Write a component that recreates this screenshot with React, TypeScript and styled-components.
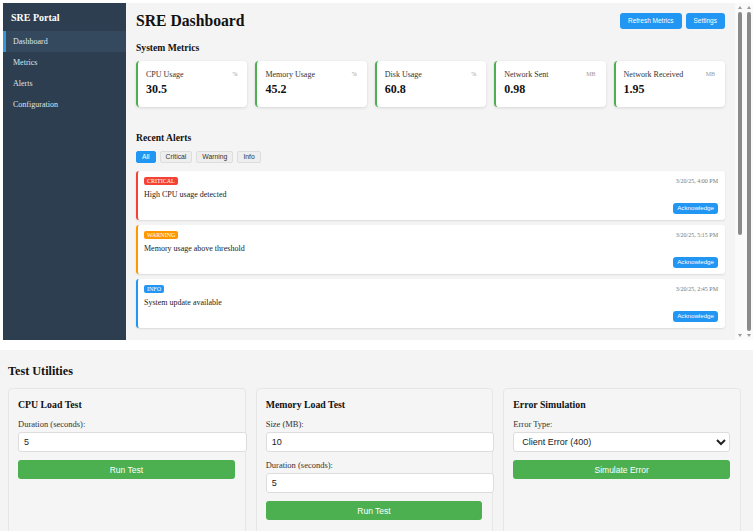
import React from "react";
import styled, { createGlobalStyle } from "styled-components";

const Global = createGlobalStyle`
  html, body { margin: 0; padding: 0; background: #ffffff; }
  body { font-family: "Liberation Serif", "Times New Roman", serif; color: #333; }
  * { box-sizing: border-box; }
`;

const Page = styled.div`
  height: 100vh;
  overflow: hidden;
  display: flex;
  flex-direction: column;
`;

const Frame = styled.div`
  margin: 3px 0 0 3px;
  height: 337px;
  flex-shrink: 0;
  display: flex;
  overflow: hidden;
`;

const Sidebar = styled.nav`
  width: 123px;
  flex-shrink: 0;
  background: #2c3e50;
  color: #ecf0f1;
`;

const Brand = styled.div`
  height: 28px;
  padding: 8px 8px;
  font-size: 10px;
  font-weight: bold;
  line-height: 14px;
  color: #fff;
`;

const NavItem = styled.div<{ $active?: boolean }>`
  height: 21px;
  display: flex;
  align-items: center;
  padding-left: 7px;
  border-left: 3px solid ${(p) => (p.$active ? "#3498db" : "transparent")};
  background: ${(p) => (p.$active ? "#34495e" : "transparent")};
  font-size: 8px;
  color: #dfe6ec;
`;

const Main = styled.main`
  flex: 1;
  min-width: 0;
  background: #f4f4f4;
  overflow: hidden;
  padding: 10px;
`;

const ScrollTrack = styled.div<{ $w: number }>`
  width: ${(p) => p.$w}px;
  flex-shrink: 0;
  background: #fafafa;
  display: flex;
  flex-direction: column;
  align-items: center;
  padding: 3px 0;
`;

const ArrowUp = styled.div`
  width: 0;
  height: 0;
  border-left: 2.5px solid transparent;
  border-right: 2.5px solid transparent;
  border-bottom: 3px solid #9a9a9a;
`;

const ArrowDown = styled.div`
  margin-top: auto;
  width: 0;
  height: 0;
  border-left: 2.5px solid transparent;
  border-right: 2.5px solid transparent;
  border-top: 3px solid #9a9a9a;
`;

const Thumb = styled.div<{ $h: number }>`
  margin-top: 3px;
  width: 4px;
  height: ${(p) => p.$h}px;
  border-radius: 2px;
  background: #8a8a8a;
`;

const Header = styled.header`
  display: flex;
  align-items: center;
  justify-content: space-between;
  height: 16px;
  margin-bottom: 12px;
`;

const Title = styled.h1`
  margin: 0;
  font-size: 15.7px;
  line-height: 16px;
  font-weight: bold;
  color: #111;
`;

const HeaderActions = styled.div`
  display: flex;
  gap: 4px;
`;

const BlueButton = styled.button<{ $h?: number; $fs?: number; $px?: number }>`
  height: ${(p) => p.$h ?? 16}px;
  padding: 0 ${(p) => p.$px ?? 8}px;
  border: none;
  border-radius: 3px;
  background: #2196f3;
  color: #fff;
  font-family: "Liberation Sans", Arial, sans-serif;
  font-size: ${(p) => p.$fs ?? 6.5}px;
  line-height: 1;
  cursor: pointer;
`;

const SectionTitle = styled.h2<{ $mt?: number }>`
  margin: ${(p) => p.$mt ?? 0}px 0 7px;
  font-size: 9.6px;
  line-height: 13px;
  font-weight: bold;
  color: #111;
`;

const MetricsGrid = styled.div`
  display: grid;
  grid-template-columns: repeat(5, 1fr);
  gap: 8px;
`;

const MetricCard = styled.div`
  height: 46px;
  background: #fff;
  border-left: 2px solid #4caf50;
  border-radius: 4px;
  box-shadow: 0 1px 3px rgba(0, 0, 0, 0.12);
  padding: 8px 10px 0 8px;
`;

const MetricTop = styled.div`
  display: flex;
  justify-content: space-between;
  align-items: center;
  height: 10px;
`;

const MetricLabel = styled.span`
  font-size: 8px;
  color: #333;
`;

const MetricUnit = styled.span`
  font-size: 6px;
  color: #999;
`;

const MetricValue = styled.div`
  margin-top: 3px;
  font-size: 12px;
  line-height: 15px;
  font-weight: bold;
  color: #111;
`;

const Filters = styled.div`
  display: flex;
  gap: 4px;
  margin-bottom: 8px;
`;

const FilterButton = styled.button<{ $active?: boolean }>`
  height: 12px;
  padding: 0 5px;
  border: 1px solid ${(p) => (p.$active ? "#2196f3" : "#dddddd")};
  border-radius: 2px;
  background: ${(p) => (p.$active ? "#2196f3" : "#eeeeee")};
  color: ${(p) => (p.$active ? "#fff" : "#333")};
  font-family: "Liberation Sans", Arial, sans-serif;
  font-size: 6.8px;
  line-height: 1;
`;

const AlertList = styled.div`
  display: flex;
  flex-direction: column;
  gap: 5px;
`;

const AlertCard = styled.div<{ $color: string }>`
  height: 49px;
  background: #fff;
  border-left: 2px solid ${(p) => p.$color};
  border-radius: 3px;
  box-shadow: 0 1px 2px rgba(0, 0, 0, 0.1);
  padding: 6px 7px 6px 6px;
  display: flex;
  flex-direction: column;
`;

const AlertTop = styled.div`
  display: flex;
  justify-content: space-between;
  align-items: center;
  height: 8px;
`;

const Badge = styled.span<{ $color: string }>`
  background: ${(p) => p.$color};
  color: #fff;
  font-size: 6px;
  line-height: 8px;
  padding: 0 3px;
  border-radius: 2px;
  text-transform: uppercase;
`;

const Time = styled.span`
  font-size: 6px;
  color: #777;
`;

const AlertMessage = styled.div`
  margin-top: 5px;
  font-size: 8px;
  line-height: 9px;
  color: #222;
`;

const AlertActions = styled.div`
  margin-top: auto;
  display: flex;
  justify-content: flex-end;
`;

const Utilities = styled.section`
  margin-top: 10px;
  flex: 1;
  background: #f4f4f4;
  padding: 14px 12px 0 8px;
`;

const UtilTitle = styled.h2`
  margin: 0 0 9px;
  font-size: 12.2px;
  line-height: 15px;
  font-weight: bold;
  color: #111;
`;

const UtilGrid = styled.div`
  display: grid;
  grid-template-columns: repeat(3, 1fr);
  gap: 10px;
`;

const UtilCard = styled.div`
  border: 1px solid #e6e6e6;
  border-radius: 4px;
  background: #f5f5f5;
  padding: 10px 10px 10px 9px;
  min-height: 160px;
`;

const CardTitle = styled.h3`
  margin: 0 0 9px;
  font-size: 9.8px;
  line-height: 11px;
  font-weight: bold;
  color: #111;
`;

const FieldLabel = styled.label<{ $mt?: number }>`
  display: block;
  margin-top: ${(p) => p.$mt ?? 0}px;
  margin-bottom: 3px;
  font-size: 8.5px;
  line-height: 10px;
  color: #333;
`;

const TextInput = styled.input`
  box-sizing: content-box;
  display: block;
  width: 100%;
  height: 18px;
  padding: 0 5px;
  border: 1px solid #dddddd;
  border-radius: 3px;
  background: #fff;
  font-family: "Liberation Sans", Arial, sans-serif;
  font-size: 9px;
  color: #222;
  outline: none;
`;

const Select = styled.select`
  display: block;
  width: 100%;
  height: 20px;
  padding: 0 4px;
  border: 1px solid #dddddd;
  border-radius: 3px;
  background: #fff;
  font-family: "Liberation Sans", Arial, sans-serif;
  font-size: 9px;
  color: #222;
  outline: none;
`;

const GreenButton = styled.button`
  display: block;
  width: 100%;
  height: 19px;
  margin-top: 8px;
  border: none;
  border-radius: 3px;
  background: #4caf50;
  color: #fff;
  font-family: "Liberation Sans", Arial, sans-serif;
  font-size: 8.5px;
`;

const metrics = [
  { label: "CPU Usage", unit: "%", value: "30.5" },
  { label: "Memory Usage", unit: "%", value: "45.2" },
  { label: "Disk Usage", unit: "%", value: "60.8" },
  { label: "Network Sent", unit: "MB", value: "0.98" },
  { label: "Network Received", unit: "MB", value: "1.95" },
];

const alerts = [
  { level: "critical", color: "#f44336", time: "3/20/25, 4:00 PM", message: "High CPU usage detected" },
  { level: "warning", color: "#ff9800", time: "3/20/25, 5:15 PM", message: "Memory usage above threshold" },
  { level: "info", color: "#2196f3", time: "3/20/25, 2:45 PM", message: "System update available" },
];

const navItems = ["Dashboard", "Metrics", "Alerts", "Configuration"];

function Scrollbar({ width, thumb }: { width: number; thumb: number }) {
  return (
    <ScrollTrack $w={width}>
      <ArrowUp />
      <Thumb $h={thumb} />
      <ArrowDown />
    </ScrollTrack>
  );
}

export default function App() {
  return (
    <Page>
      <Global />
      <Frame>
        <Sidebar>
          <Brand>SRE Portal</Brand>
          {navItems.map((n, i) => (
            <NavItem key={n} $active={i === 0}>
              {n}
            </NavItem>
          ))}
        </Sidebar>
        <Main>
          <Header>
            <Title>SRE Dashboard</Title>
            <HeaderActions>
              <BlueButton>Refresh Metrics</BlueButton>
              <BlueButton>Settings</BlueButton>
            </HeaderActions>
          </Header>
          <SectionTitle>System Metrics</SectionTitle>
          <MetricsGrid>
            {metrics.map((m) => (
              <MetricCard key={m.label}>
                <MetricTop>
                  <MetricLabel>{m.label}</MetricLabel>
                  <MetricUnit>{m.unit}</MetricUnit>
                </MetricTop>
                <MetricValue>{m.value}</MetricValue>
              </MetricCard>
            ))}
          </MetricsGrid>
          <SectionTitle $mt={24}>Recent Alerts</SectionTitle>
          <Filters>
            <FilterButton $active>All</FilterButton>
            <FilterButton>Critical</FilterButton>
            <FilterButton>Warning</FilterButton>
            <FilterButton>Info</FilterButton>
          </Filters>
          <AlertList>
            {alerts.map((a) => (
              <AlertCard key={a.level} $color={a.color}>
                <AlertTop>
                  <Badge $color={a.color}>{a.level}</Badge>
                  <Time>{a.time}</Time>
                </AlertTop>
                <AlertMessage>{a.message}</AlertMessage>
                <AlertActions>
                  <BlueButton $h={11} $fs={6.2} $px={4}>Acknowledge</BlueButton>
                </AlertActions>
              </AlertCard>
            ))}
          </AlertList>
        </Main>
        <Scrollbar width={10} thumb={223} />
        <Scrollbar width={8} thumb={319} />
      </Frame>
      <Utilities>
        <UtilTitle>Test Utilities</UtilTitle>
        <UtilGrid>
          <UtilCard>
            <CardTitle>CPU Load Test</CardTitle>
            <FieldLabel>Duration (seconds):</FieldLabel>
            <TextInput defaultValue="5" />
            <GreenButton>Run Test</GreenButton>
          </UtilCard>
          <UtilCard>
            <CardTitle>Memory Load Test</CardTitle>
            <FieldLabel>Size (MB):</FieldLabel>
            <TextInput defaultValue="10" />
            <FieldLabel $mt={8}>Duration (seconds):</FieldLabel>
            <TextInput defaultValue="5" />
            <GreenButton>Run Test</GreenButton>
          </UtilCard>
          <UtilCard>
            <CardTitle>Error Simulation</CardTitle>
            <FieldLabel>Error Type:</FieldLabel>
            <Select defaultValue="400">
              <option value="400">Client Error (400)</option>
              <option value="500">Server Error (500)</option>
              <option value="timeout">Timeout</option>
            </Select>
            <GreenButton>Simulate Error</GreenButton>
          </UtilCard>
        </UtilGrid>
      </Utilities>
    </Page>
  );
}
